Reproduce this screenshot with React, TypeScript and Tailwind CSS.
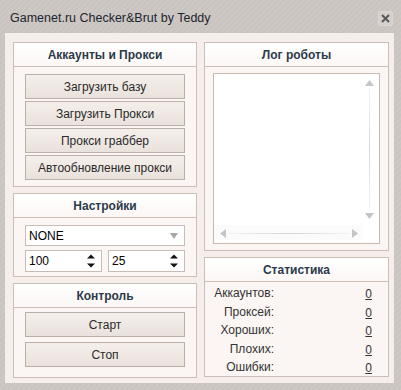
import React from "react";

const font = { fontFamily: '"Liberation Sans", Arial, sans-serif' };

function Box({ title, className, children }: { title: string; className: string; children?: React.ReactNode }) {
  return (
    <div className={`flex flex-col border border-[#cdbfb8] bg-[#fbf6f3] ${className}`}>
      <div className="h-[24px] shrink-0 flex items-center justify-center border-b border-[#cdbfb8] bg-gradient-to-b from-[#ffffff] to-[#fbf7f5] text-[12px] font-bold text-[#2c3a4a]">
        {title}
      </div>
      {children}
    </div>
  );
}

function Btn({ label }: { label: string }) {
  return (
    <div className="h-[25px] flex items-center justify-center border border-[#bcaea8] bg-gradient-to-b from-[#f5efeb] to-[#e9e1dc] text-[12px] text-[#2a2a2a]">
      {label}
    </div>
  );
}

function Spin({ value }: { value: string }) {
  return (
    <div className="relative h-[22px] flex-1 flex items-center border border-[#c9bcb6] bg-white pl-[3px] text-[12px] text-black">
      {value}
      <svg className="absolute right-[6px] top-[3px]" width="8" height="14" viewBox="0 0 8 14">
        <path d="M0 4.5 L4 0.5 L8 4.5 Z" fill="#111" />
        <path d="M0 9.5 L4 13.5 L8 9.5 Z" fill="#111" />
      </svg>
    </div>
  );
}

export default function App() {
  const stats = ["Аккаунтов:", "Проксей:", "Хороших:", "Плохих:", "Ошибки:"];
  return (
    <div
      style={font}
      className="w-[401px] h-[390px] flex flex-col bg-[repeating-linear-gradient(135deg,#c9c4c0_0px,#c9c4c0_2px,#cdc8c4_2px,#cdc8c4_4px)]"
    >
      <div className="h-[33px] flex justify-between pl-[10px] pr-[8px]">
        <div className="pt-[10px] text-[12.5px] text-[#1e2530] leading-[16px]">Gamenet.ru Checker&amp;Brut by Teddy</div>
        <div className="mt-[11px] w-[15px] h-[15px] flex items-center justify-center rounded-[2px] border border-[#dcd7d3] bg-[#d5d0cc]">
          <svg width="9" height="9" viewBox="0 0 9 9">
            <path d="M1 1 L8 8 M8 1 L1 8" stroke="#5a5a5a" strokeWidth="2" />
          </svg>
        </div>
      </div>
      <div className="ml-[5px] w-[389px] h-[350px] bg-[#f6eeea] pt-[9px] pl-[8px] pr-[5px] flex gap-[7px]">
        <div className="w-[184px] flex flex-col">
          <Box title="Аккаунты и Прокси" className="h-[145px]">
            <div className="flex flex-col gap-[2px] px-[11px] pt-[7px]">
              <Btn label="Загрузить базу" />
              <Btn label="Загрузить Прокси" />
              <Btn label="Прокси граббер" />
              <Btn label="Автообновление прокси" />
            </div>
          </Box>
          <Box title="Настройки" className="h-[84px] mt-[6px]">
            <div className="flex flex-col gap-[4px] px-[11px] pt-[7px]">
              <div className="relative h-[21px] flex items-center border border-[#c9bcb6] bg-white pl-[3px] text-[12px] text-black">
                NONE
                <svg className="absolute right-[6px] top-[7px]" width="8" height="6" viewBox="0 0 8 6">
                  <path d="M0 0 L8 0 L4 6 Z" fill="#a6a6a6" />
                </svg>
              </div>
              <div className="flex gap-[6px]">
                <Spin value="100" />
                <Spin value="25" />
              </div>
            </div>
          </Box>
          <Box title="Контроль" className="h-[95px] mt-[6px]">
            <div className="flex flex-col gap-[5px] px-[11px] pt-[4px]">
              <Btn label="Старт" />
              <Btn label="Стоп" />
            </div>
          </Box>
        </div>
        <div className="w-[185px] flex flex-col">
          <Box title="Лог роботы" className="h-[209px]">
            <div className="px-[8px] pt-[6px]">
              <div className="relative h-[171px] border border-[#c9b8b0] bg-white">
                <div className="absolute left-0 top-[151px] w-[149px] h-[15px] bg-[#fbfbfb]" />
                <svg className="absolute right-[5px] top-[6px]" width="9" height="6" viewBox="0 0 9 6">
                  <path d="M0 6 L4.5 0 L9 6 Z" fill="#c4c4c4" />
                </svg>
                <div className="absolute right-[9px] top-[14px] w-[1px] h-[124px] bg-gradient-to-b from-[#f4f4f4] via-[#d9d9d9] to-[#f4f4f4]" />
                <svg className="absolute right-[5px] top-[139px]" width="9" height="6" viewBox="0 0 9 6">
                  <path d="M0 0 L9 0 L4.5 6 Z" fill="#c4c4c4" />
                </svg>
                <svg className="absolute left-[6px] top-[155px]" width="6" height="9" viewBox="0 0 6 9">
                  <path d="M6 0 L0 4.5 L6 9 Z" fill="#c4c4c4" />
                </svg>
                <div className="absolute left-[14px] top-[159px] w-[122px] h-[1px] bg-gradient-to-r from-[#f4f4f4] via-[#d4d4d4] to-[#f4f4f4]" />
                <svg className="absolute left-[138px] top-[155px]" width="6" height="9" viewBox="0 0 6 9">
                  <path d="M0 0 L6 4.5 L0 9 Z" fill="#c4c4c4" />
                </svg>
              </div>
            </div>
          </Box>
          <Box title="Статистика" className="h-[120px] mt-[6px]">
            <div className="flex flex-col pt-[2px]">
              {stats.map((s) => (
                <div key={s} className="h-[18.5px] flex items-center text-[12px] text-[#333]">
                  <div className="w-[69px] text-right">{s}</div>
                  <div className="flex-1 text-right pr-[16px] pt-[2px] underline">0</div>
                </div>
              ))}
            </div>
          </Box>
        </div>
      </div>
    </div>
  );
}
